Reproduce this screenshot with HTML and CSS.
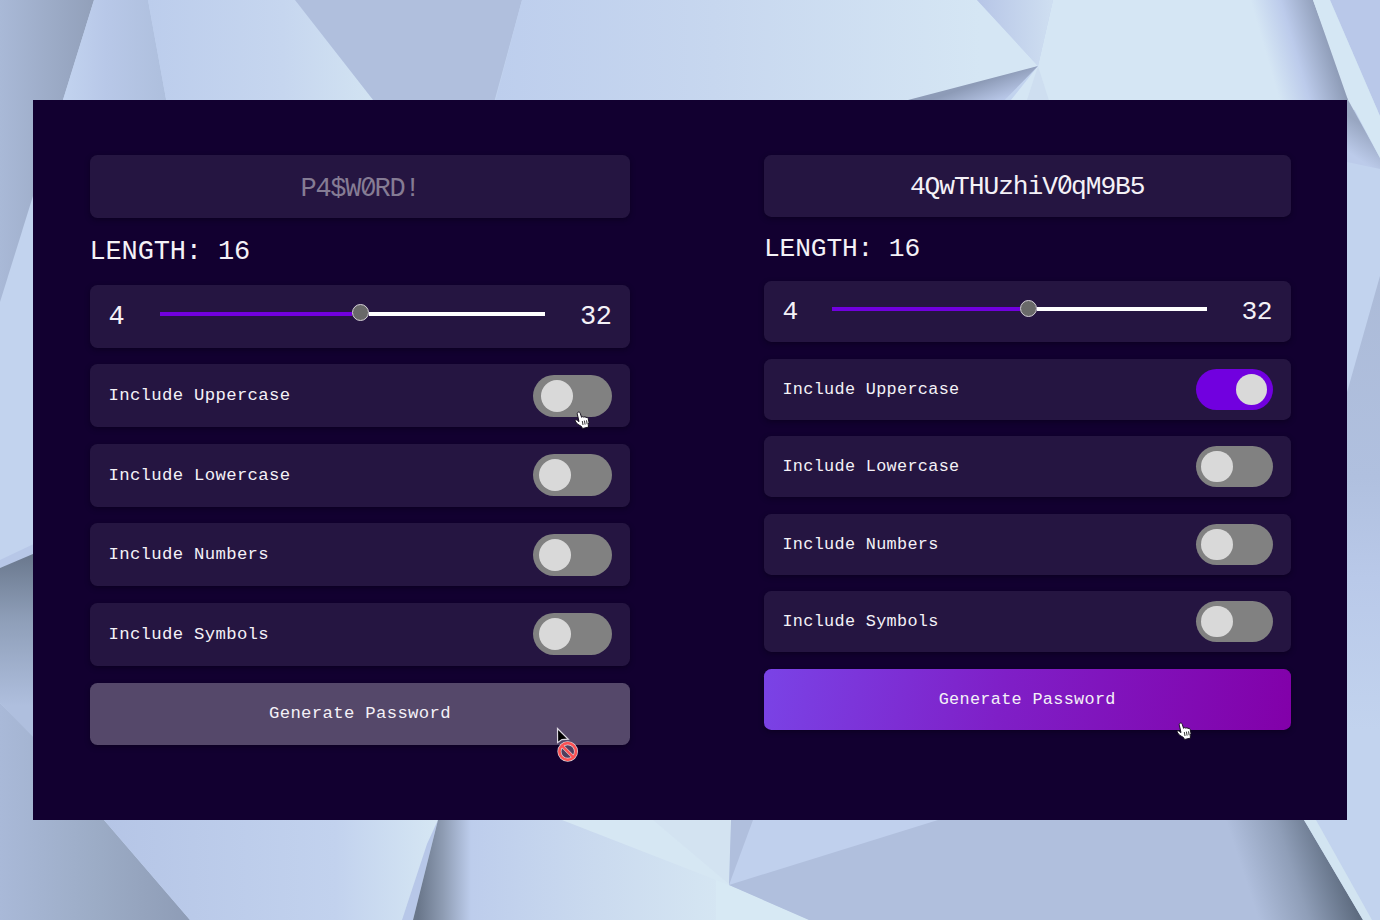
FILE: index.html
```html
<!DOCTYPE html>
<html lang="en">
<head>
<meta charset="utf-8">
<title>Password Generator</title>
<link rel="stylesheet" href="styles.css">
</head>
<body>
<svg class="backdrop" viewBox="0 0 1380 920" aria-hidden="true">
  <defs>
    <linearGradient id="a" gradientUnits="userSpaceOnUse" x1="0" y1="0" x2="94" y2="0"><stop offset="0" stop-color="#a9b9d7"/><stop offset="1" stop-color="#92a0ba"/></linearGradient>
    <linearGradient id="b" gradientUnits="userSpaceOnUse" x1="64" y1="0" x2="166" y2="0"><stop offset="0" stop-color="#c2d3ef"/><stop offset=".4" stop-color="#b8c8e8"/><stop offset="1" stop-color="#aebfdd"/></linearGradient>
    <linearGradient id="c" gradientUnits="userSpaceOnUse" x1="148" y1="0" x2="373" y2="0"><stop offset="0" stop-color="#bccdec"/><stop offset=".6" stop-color="#c6d6ef"/><stop offset="1" stop-color="#d2e3f2"/></linearGradient>
    <linearGradient id="d" gradientUnits="userSpaceOnUse" x1="495" y1="0" x2="980" y2="0"><stop offset="0" stop-color="#bdceed"/><stop offset=".45" stop-color="#c7d7ef"/><stop offset="1" stop-color="#d5e6f4"/></linearGradient>
    <linearGradient id="e" gradientUnits="userSpaceOnUse" x1="980" y1="0" x2="1053" y2="0"><stop offset="0" stop-color="#b7c6e7"/><stop offset="1" stop-color="#cfdff1"/></linearGradient>
    <linearGradient id="f" gradientUnits="userSpaceOnUse" x1="1332" y1="50" x2="1270" y2="68"><stop offset="0" stop-color="#8e9cb7"/><stop offset=".55" stop-color="#bccbeb"/><stop offset="1" stop-color="#d5e6f4"/></linearGradient>
    <linearGradient id="g" gradientUnits="userSpaceOnUse" x1="970" y1="86" x2="982" y2="120"><stop offset="0" stop-color="#8d9bb7"/><stop offset=".65" stop-color="#b8c7e8"/></linearGradient>
    <linearGradient id="h" x1="0" y1="0" x2="0" y2="1"><stop offset="0" stop-color="#68768b"/><stop offset=".35" stop-color="#8e9eb8"/><stop offset=".8" stop-color="#afbfde"/></linearGradient>
    <linearGradient id="i" gradientUnits="userSpaceOnUse" x1="0" y1="0" x2="190" y2="0"><stop offset="0" stop-color="#a9b9d8"/><stop offset=".5" stop-color="#9cacc6"/><stop offset="1" stop-color="#8e9cb6"/></linearGradient>
    <linearGradient id="j" gradientUnits="userSpaceOnUse" x1="104" y1="0" x2="435" y2="0"><stop offset="0" stop-color="#b5c5e6"/><stop offset=".7" stop-color="#c2d2ee"/><stop offset="1" stop-color="#d5e6f3"/></linearGradient>
    <linearGradient id="k" gradientUnits="userSpaceOnUse" x1="418" y1="0" x2="730" y2="0"><stop offset="0" stop-color="#69768a"/><stop offset=".08" stop-color="#8e9cb3"/><stop offset=".17" stop-color="#bdcdec"/><stop offset=".6" stop-color="#cbdbef"/><stop offset="1" stop-color="#d6e7f3"/></linearGradient>
    <linearGradient id="l" gradientUnits="userSpaceOnUse" x1="1343" y1="870" x2="1252" y2="900"><stop offset="0" stop-color="#5e6c80"/><stop offset=".5" stop-color="#8f9eb8"/><stop offset="1" stop-color="#b0bfdd"/></linearGradient>
    <linearGradient id="m" x1="0" y1="0" x2="0" y2="1"><stop offset="0" stop-color="#acbbd8"/><stop offset=".4" stop-color="#b0c0df"/><stop offset=".6" stop-color="#b9c9e9"/><stop offset=".9" stop-color="#c2d3ee"/></linearGradient>
    <linearGradient id="n" gradientUnits="userSpaceOnUse" x1="1362" y1="125" x2="1345" y2="150"><stop offset="0" stop-color="#98a6c1"/><stop offset="1" stop-color="#bccbea"/></linearGradient>
  </defs>
  <path fill="#c2d3ee" d="M0 0h1380v920H0z"/>
  <path fill="url(#a)" d="M0 0h94L0 302z"/>
  <path fill="url(#b)" d="M94 0h54l20 110H60z"/>
  <path fill="url(#c)" d="M148 0h147l86 110H168z"/>
  <path fill="#b0bfdd" d="M295 0h227l-30 110H381z"/>
  <path fill="url(#d)" d="M522 0h455l61 66-130 44H493z"/>
  <path fill="#d5e6f4" d="M1053 0h270l40 110H1003l35-44z"/>
  <path fill="url(#e)" d="M977 0h76l-15 66z"/>
  <path fill="url(#g)" d="M1038 66 908 100v10h87z"/>
  <path fill="#cedef0" d="m1038 66-11 34v10h25z"/>
  <path fill="url(#f)" d="M1200 0h113l35 100H1200z"/>
  <path fill="url(#n)" d="m1347 98 33 60v11l-33-7z"/>
  <path fill="#b9c8e9" d="M1330 0h50v116z"/>
  <path fill="#d5e7f4" d="M1313 0h17l50 116v42l-28-53z"/>
  <path fill="url(#m)" d="m1380 276-40 141v363h40z"/>
  <path fill="#b7c7e7" d="m0 560 40-19v11L0 568z"/>
  <path fill="url(#h)" d="m0 568 40-17v194L0 703z"/>
  <path fill="url(#i)" d="m0 703 40 41v76h64l86 100H0z"/>
  <path fill="url(#j)" d="M104 820h334l-25 100H190z"/>
  <path fill="#b7c7e8" d="m438 820-11 24-25 76h11z"/>
  <path fill="url(#k)" d="M438 820h293l-2 65 80 35H413z"/>
  <path fill="#d6e7f3" d="M562 820h169l-2 65z"/>
  <path fill="#cfdfef" d="m653 820 77 65v-65z" opacity=".5"/>
  <path fill="#d7e9f4" d="m716 880 13 5 80 35h-93z"/>
  <path fill="#b0bfdd" d="M731 820h573l59 100H809l-80-35z"/>
  <path fill="#c0d0ed" d="M753 820h185l-209 65z"/>
  <path fill="url(#l)" d="M1180 820h124l59 100h-183z"/>
  <path fill="#d2e4f1" d="M1304 820h12l56 100h-9z"/>
</svg>
<main class="stage">
  <section class="generator">
    <div class="card output output-empty"><span>P4$W<span class="zero">0</span>RD!</span></div>
    <div class="length">LENGTH: 16</div>
    <div class="card range"><span>4</span><div class="track"><div class="fill"></div><div class="thumb"></div><div class="rest"></div></div><span>32</span></div>
    <div class="card option"><span>Include Uppercase</span><div class="switch hovered"><div class="knob"></div>
      <svg class="cursor hand-left" viewBox="0 0 16 18"><path d="M4.1 1.2c1-.5 1.8.1 2.1 1l1.4 4.1 1-.7 1.2.5 1.2-.4 1 .7 1.3-.1.9 1.2.8 3.8-.7 2.2.2 2.6-6 1.4-1-2L3.300 13 1 9.900c.1-1.200 1.400-1.500 2.400-.4L5 10.600 3.300 3.100c-.2-.8 0-1.500.8-1.900z" fill="#fff" stroke="#17121f" stroke-width="1"/><path d="m8.300 10 .7 4m1.400-4.400.7 4m1.400-4.300.7 3.900" stroke="#222" stroke-width=".9" fill="none"/></svg></div></div>
    <div class="card option"><span>Include Lowercase</span><div class="switch"><div class="knob"></div></div></div>
    <div class="card option"><span>Include Numbers</span><div class="switch"><div class="knob"></div></div></div>
    <div class="card option"><span>Include Symbols</span><div class="switch"><div class="knob"></div></div></div>
    <div class="card action disabled"><span>Generate Password</span>
      <svg class="cursor blocked" viewBox="0 0 24 36"><path d="m1.500 1.500.1 14.200 4.300-3.100 6.400-.4z" fill="#000" stroke="#ddd8e2" stroke-width="1.200"/><circle cx="11.700" cy="24.500" r="8.300" fill="#513d5d" stroke="#ded9df" stroke-width="4"/><path d="m5.900 18.700 11.600 11.600" stroke="#ded9df" stroke-width="3.400"/><circle cx="11.700" cy="24.500" r="8.300" fill="none" stroke="#fb5254" stroke-width="2.700"/><path d="m5.900 18.700 11.600 11.600" stroke="#fb5254" stroke-width="2.500"/></svg></div>
  </section>
  <section class="generator compact">
    <div class="card output"><span>4QwTHUzhiV<span class="zero">0</span>qM9B5</span></div>
    <div class="length">LENGTH: 16</div>
    <div class="card range"><span>4</span><div class="track"><div class="fill"></div><div class="thumb"></div><div class="rest"></div></div><span>32</span></div>
    <div class="card option"><span>Include Uppercase</span><div class="switch on"><div class="knob"></div></div></div>
    <div class="card option"><span>Include Lowercase</span><div class="switch"><div class="knob"></div></div></div>
    <div class="card option"><span>Include Numbers</span><div class="switch"><div class="knob"></div></div></div>
    <div class="card option"><span>Include Symbols</span><div class="switch"><div class="knob"></div></div></div>
    <div class="card action"><span>Generate Password</span>
      <svg class="cursor hand-right" viewBox="0 0 16 18"><path d="M4.1 1.2c1-.5 1.8.1 2.1 1l1.4 4.1 1-.7 1.2.5 1.2-.4 1 .7 1.3-.1.9 1.2.8 3.8-.7 2.2.2 2.6-6 1.4-1-2L3.300 13 1 9.900c.1-1.200 1.400-1.500 2.400-.4L5 10.600 3.300 3.100c-.2-.8 0-1.500.8-1.900z" fill="#fff" stroke="#17121f" stroke-width="1"/><path d="m8.300 10 .7 4m1.400-4.400.7 4m1.400-4.300.7 3.900" stroke="#222" stroke-width=".9" fill="none"/></svg></div>
  </section>
</main>
</body>
</html>
```

FILE: styles.css
```css
* { box-sizing: border-box; }
body {
  margin: 0;
  width: 1380px;
  height: 920px;
  overflow: hidden;
  padding: 100px 33px;
  font-family: "Liberation Mono", monospace;
  color: #f4f1f7;
}
.backdrop { position: absolute; top: 0; left: 0; z-index: -1; width: 1380px; height: 920px; }
.stage {
  display: flex;
  align-items: flex-start;
  gap: 133.5px;
  width: 1314px;
  height: 720px;
  padding: 55.3px 56.500px;
  background: #120030;
}
.generator {
  --s: 1;
  display: flex;
  flex-direction: column;
  gap: calc(16.700px * var(--s));
  width: calc(541px * var(--s));
}
.compact { --s: .9735; }
.card {
  position: relative;
  display: flex;
  align-items: center;
  justify-content: space-between;
  height: calc(62.900px * var(--s));
  padding: 0 calc(19px * var(--s));
  border-radius: calc(7.500px * var(--s));
  background: #251541;
  box-shadow: 0 2px 5px rgba(8, 0, 22, .5);
}
.output {
  justify-content: center;
  padding-top: 1px;
  font-size: calc(27px * var(--s));
  letter-spacing: calc(-1.150px * var(--s));
}
.compact .output { padding-top: 0; letter-spacing: -1.050px; }
.output-empty { color: #857c94; letter-spacing: -1.250px; }
.zero {
  display: inline-block;
  width: .56em;
  text-align: center;
  font-family: Inter, sans-serif;
  font-size: .95em;
  font-weight: 400;
  font-feature-settings: "zero";
  letter-spacing: 0;
}
.length {
  height: calc(33.100px * var(--s));
  line-height: calc(35px * var(--s));
  font-size: calc(27px * var(--s));
  letter-spacing: calc(-.150px * var(--s));
}
.compact .length { line-height: 32px; }
.range { font-size: calc(27px * var(--s)); letter-spacing: calc(-.500px * var(--s)); }
.range > span { padding-top: 2px; }
.compact .range > span { padding-top: 1px; }
.track {
  display: flex;
  align-items: center;
  width: calc(385px * var(--s));
  margin-bottom: calc(7px * var(--s));
}
.fill, .rest { flex: 1; height: 4px; margin-top: 2px; }
.fill { flex-grow: 1.100; background: #7100df; }
.rest { background: #fff; }
.thumb {
  flex: none;
  width: 17px;
  height: 17px;
  border: 1px solid #d5d0d8;
  border-radius: 50%;
  background: #696969;
}
.option, .action { font-size: calc(17.300px * var(--s)); letter-spacing: calc(.330px * var(--s)); }
.switch {
  position: relative;
  display: flex;
  align-items: center;
  width: calc(79px * var(--s));
  height: calc(42px * var(--s));
  margin-right: -.500px;
  padding: 0 calc(6px * var(--s));
  border-radius: 99px;
  background: #818181;
}
.knob {
  width: calc(32px * var(--s));
  height: calc(32px * var(--s));
  border-radius: 50%;
  background: #d9d9d9;
}
.hovered { padding-left: 8px; }
.on { justify-content: flex-end; background: #7100df; }
.action { justify-content: center; background: linear-gradient(100deg, #7a43e6, #7f1fc7 45%, #8200a9); }
.disabled { background: #55486a; }
.cursor { position: absolute; overflow: visible; }
.hand-left { left: 41px; top: 36px; width: 16px; height: 18px; }
.hand-right { left: 412px; top: 53px; width: 16px; height: 18px; }
.blocked { left: 466px; top: 44px; width: 24px; height: 36px; }
```
